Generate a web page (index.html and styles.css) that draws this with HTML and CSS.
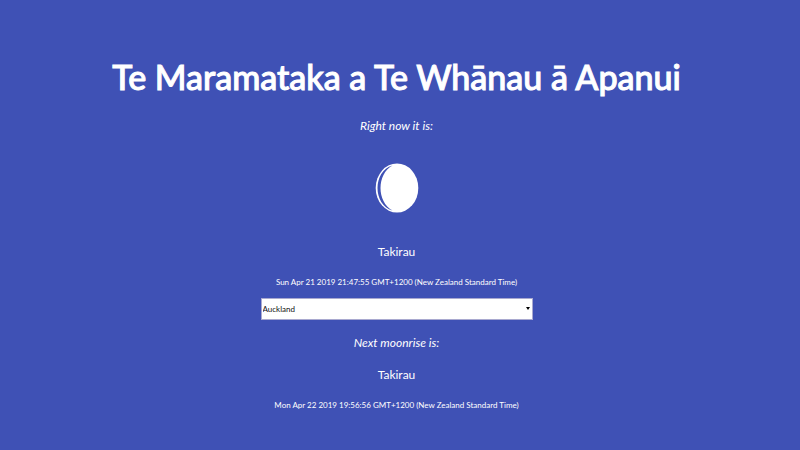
FILE: index.html
```html
<!DOCTYPE html>
<html lang="mi">
<head>
<meta charset="utf-8">
<meta name="viewport" content="width=device-width, initial-scale=1">
<title>Te Maramataka a Te Whānau ā Apanui</title>
<link rel="stylesheet" href="styles.css">
</head>
<body>
<main class="calendar">
  <h1 class="title">Te Maramataka a Te Whānau ā Apanui</h1>
  <p class="label">Right now it is:</p>
  <svg class="moon" viewBox="0 0 44 50" aria-hidden="true">
    <ellipse cx="22" cy="25" rx="21.3" ry="24.5" fill="#fff"/>
    <path d="M17.500 2.500C-2.500 8-2.500 42 17.500 47.500C1.500 39 1.500 11 17.500 2.500Z" fill="#3f51b5"/>
  </svg>
  <p class="night">Takirau</p>
  <p class="date">Sun Apr 21 2019 21:47:55 GMT+1200 (New Zealand Standard Time)</p>
  <div class="picker">
    <select class="city" aria-label="City">
      <option>Auckland</option>
    </select>
  </div>
  <p class="label">Next moonrise is:</p>
  <p class="night">Takirau</p>
  <p class="date">Mon Apr 22 2019 19:56:56 GMT+1200 (New Zealand Standard Time)</p>
</main>
</body>
</html>
```
FILE: styles.css
```css
* {
  box-sizing: border-box;
}

body {
  margin: 0;
  min-height: 100vh;
  background: #3f51b5;
  color: #fff;
  font-family: Lato, sans-serif;
}

.calendar {
  display: flex;
  flex-direction: column;
  align-items: center;
  padding: 53px 7px 32px 0;
  text-align: center;
}

.title {
  margin: 0 0 17px;
  font-size: 34px;
  line-height: 48px;
  font-weight: 500;
  -webkit-text-stroke: 1px #fff;
}

.label,
.night,
.date {
  margin: 0;
}

.label {
  font-size: 12px;
  line-height: 16px;
  font-style: italic;
}

.moon {
  width: 44px;
  height: 50px;
  margin: 29px 0 31px;
}

.night {
  font-size: 12px;
  line-height: 16px;
}

.date {
  margin-top: 14px;
  font-size: 8px;
  line-height: 16px;
}

.picker {
  position: relative;
  width: 34%;
  min-width: 272px;
  margin: 8px 0 15px;
}

.picker::after {
  content: "";
  position: absolute;
  top: 9px;
  right: 3px;
  border: 2px solid transparent;
  border-top: 3px solid #000;
  border-bottom: 0;
  pointer-events: none;
}

.city {
  display: block;
  width: 100%;
  height: 22px;
  padding: 0 1px;
  border: 1px solid #a9a9d0;
  border-radius: 0;
  appearance: none;
  background: #fff;
  color: #111;
  font: 8px/16px Lato, sans-serif;
}

.label + .night {
  margin-top: 16px;
}
```
